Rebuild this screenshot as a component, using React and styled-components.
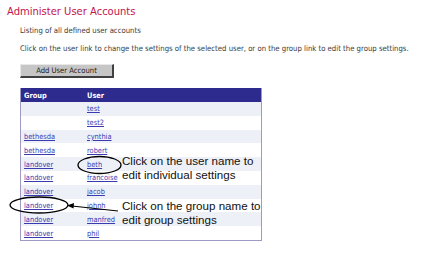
import React from "react";
import styled, { createGlobalStyle } from "styled-components";

const GlobalStyle = createGlobalStyle`
  html, body {
    margin: 0;
    padding: 0;
    background: #fff;
  }
  body {
    font-family: "DejaVu Sans Condensed", "DejaVu Sans", Verdana, sans-serif;
    font-stretch: condensed;
  }
`;

const Page = styled.div`
  width: 429px;
  height: 263px;
  overflow: hidden;
  padding: 5px 0 0 7px;
  box-sizing: border-box;
`;

const Title = styled.h1`
  margin: 0;
  font-size: 11.1px;
  font-weight: normal;
  color: #c4124c;
  line-height: 13px;
`;

const Content = styled.div`
  padding-left: 13px;
  display: flex;
  flex-direction: column;
  align-items: flex-start;
`;

const Para = styled.p`
  margin: ${(p) => p.$top}px 0 0;
  font-size: 7.7px;
  line-height: 10px;
  color: #3a3a3a;
  white-space: nowrap;
`;

const Button = styled.button`
  margin-top: 10px;
  width: 94px;
  height: 14px;
  padding: 0;
  background: #c6c6c6;
  border: none;
  border-top: 1px solid #e8e8e8;
  border-left: 1px solid #e8e8e8;
  border-right: 2px solid #404040;
  border-bottom: 2px solid #404040;
  font-family: inherit;
  font-stretch: condensed;
  font-size: 7.6px;
  color: #222;
  line-height: 10px;
`;

const TableWrap = styled.div`
  position: relative;
  margin-top: 10px;
`;

const Table = styled.div`
  width: 242px;
  border: 1px solid #9d9bc4;
  border-top: none;
  box-sizing: border-box;
`;

const Row = styled.div`
  display: grid;
  grid-template-columns: 63px 1fr;
  height: ${(p) => (p.$head ? 14 : 13.8)}px;
  align-items: center;
  padding-left: 3px;
  background: ${(p) => (p.$head ? "#2d2b8e" : p.$alt ? "#eef0f8" : "#fff")};
  font-size: 7.4px;
  color: ${(p) => (p.$head ? "#fff" : "#3b3bb0")};
  font-weight: ${(p) => (p.$head ? "bold" : "normal")};
`;

const Link = styled.span`
  text-decoration: underline;
`;

const Overlay = styled.svg`
  position: absolute;
  left: -19px;
  top: 0;
  pointer-events: none;
`;

const Note = styled.div`
  position: absolute;
  left: ${(p) => p.$x}px;
  top: ${(p) => p.$y}px;
  font-family: "Liberation Sans", Arial, sans-serif;
  font-stretch: normal;
  font-size: 11.6px;
  line-height: 13.5px;
  color: #111;
  white-space: nowrap;
`;

const rows = [
  ["", "test"],
  ["", "test2"],
  ["bethesda", "cynthia"],
  ["bethesda", "robert"],
  ["landover", "beth"],
  ["landover", "francoise"],
  ["landover", "jacob"],
  ["landover", "johnh"],
  ["landover", "manfred"],
  ["landover", "phil"],
];

export default function App() {
  return (
    <Page>
      <GlobalStyle />
      <Title>Administer User Accounts</Title>
      <Content>
        <Para $top={8}>Listing of all defined user accounts</Para>
        <Para $top={8}>
          Click on the user link to change the settings of the selected user, or on the group link to edit the group settings.
        </Para>
        <Button>Add User Account</Button>
        <TableWrap>
          <Table>
            <Row $head>
              <span>Group</span>
              <span>User</span>
            </Row>
            {rows.map(([g, u], i) => (
              <Row key={u} $alt={i % 2 === 0}>
                <span>{g && <Link>{g}</Link>}</span>
                <span>
                  <Link>{u}</Link>
                </span>
              </Row>
            ))}
          </Table>
          <Note $x={102} $y={66}>
            Click on the user name to
            <br />
            edit individual settings
          </Note>
          <Note $x={102} $y={111}>
            Click on the group name to
            <br />
            edit group settings
          </Note>
          <Overlay width="280" height="160" viewBox="0 0 280 160">
            <ellipse cx="98.5" cy="77" rx="21.5" ry="8.5" fill="none" stroke="#000" strokeWidth="1.3" />
            <ellipse cx="38" cy="117" rx="29" ry="8" fill="none" stroke="#000" strokeWidth="1.3" />
            <line x1="117" y1="123" x2="71" y2="118" stroke="#000" strokeWidth="1.2" />
            <polygon points="66,117.5 73,115 72.5,120.5" fill="#000" />
          </Overlay>
        </TableWrap>
      </Content>
    </Page>
  );
}
